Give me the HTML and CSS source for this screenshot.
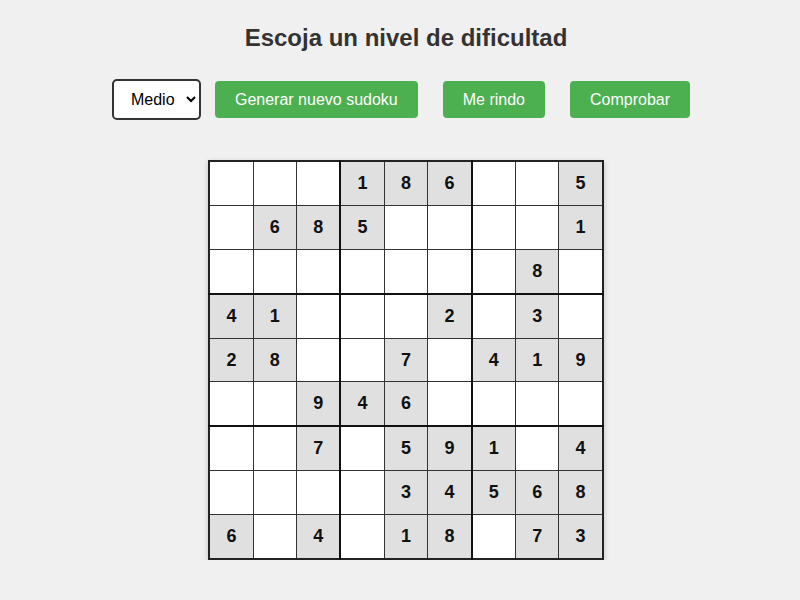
FILE: index.html
```html
<!DOCTYPE html>
<html lang="es">
<head>
<meta charset="utf-8">
<title>Sudoku</title>
<link rel="stylesheet" href="styles.css">
</head>
<body>
<main class="page">
  <h1 class="title">Escoja un nivel de dificultad</h1>
  <div class="controls">
    <select class="level">
      <option>Fácil</option>
      <option selected>Medio</option>
      <option>Difícil</option>
    </select>
    <button class="btn btn-first">Generar nuevo sudoku</button>
    <button class="btn">Me rindo</button>
    <button class="btn">Comprobar</button>
  </div>
  <table class="board">
    <tr><td></td><td></td><td class="c3"></td><td class="g">1</td><td class="g">8</td><td class="g c3">6</td><td></td><td></td><td class="g">5</td></tr>
    <tr><td></td><td class="g">6</td><td class="g c3">8</td><td class="g">5</td><td></td><td class="c3"></td><td></td><td></td><td class="g">1</td></tr>
    <tr class="r3"><td></td><td></td><td class="c3"></td><td></td><td></td><td class="c3"></td><td></td><td class="g">8</td><td></td></tr>
    <tr><td class="g">4</td><td class="g">1</td><td class="c3"></td><td></td><td></td><td class="g c3">2</td><td></td><td class="g">3</td><td></td></tr>
    <tr><td class="g">2</td><td class="g">8</td><td class="c3"></td><td></td><td class="g">7</td><td class="c3"></td><td class="g">4</td><td class="g">1</td><td class="g">9</td></tr>
    <tr class="r3"><td></td><td></td><td class="g c3">9</td><td class="g">4</td><td class="g">6</td><td class="c3"></td><td></td><td></td><td></td></tr>
    <tr><td></td><td></td><td class="g c3">7</td><td></td><td class="g">5</td><td class="g c3">9</td><td class="g">1</td><td></td><td class="g">4</td></tr>
    <tr><td></td><td></td><td class="c3"></td><td></td><td class="g">3</td><td class="g c3">4</td><td class="g">5</td><td class="g">6</td><td class="g">8</td></tr>
    <tr><td class="g">6</td><td></td><td class="g c3">4</td><td></td><td class="g">1</td><td class="g c3">8</td><td></td><td class="g">7</td><td class="g">3</td></tr>
  </table>
</main>
</body>
</html>
```
FILE: styles.css
```css
html, body {
  margin: 0;
  padding: 0;
  background: #f0f0f0;
  font-family: "Liberation Sans", Arial, sans-serif;
}

.page {
  display: flex;
  flex-direction: column;
  align-items: center;
  padding-top: 24px;
}

.title {
  margin: 0;
  font-size: 24px;
  line-height: 27px;
  font-weight: bold;
  color: #333;
  padding-left: 12px;
}

.controls {
  display: flex;
  align-items: center;
  margin-top: 28px;
  padding-left: 2px;
}

.level {
  width: 89px;
  height: 41px;
  border: 2px solid #333;
  border-radius: 5px;
  background: #fff;
  font-family: "Liberation Sans", Arial, sans-serif;
  font-size: 16px;
  padding: 0 0 0 13px;
  color: #000;
}

.btn {
  height: 37px;
  margin-left: 25px;
  padding: 0 20px;
  border: none;
  border-radius: 4px;
  background: #4caf50;
  color: #fff;
  font-family: "Liberation Sans", Arial, sans-serif;
  font-size: 16px;
}

.btn-first {
  margin-left: 14px;
}

.board {
  margin-top: 40px;
  margin-left: 12px;
  border-collapse: collapse;
  border: 2px solid #222;
  box-shadow: 0 2px 6px rgba(0, 0, 0, 0.2);
  background: #fff;
}

.board td {
  width: 42.4px;
  height: 42.9px;
  padding: 0;
  border: 1px solid #333;
  text-align: center;
  vertical-align: middle;
  font-size: 18px;
  font-weight: bold;
  color: #111;
  background: #fff;
}

.board td.g {
  background: #e0e0e0;
}

.board td.c3 {
  border-right: 2px solid #111;
}

.board tr.r3 td {
  border-bottom: 2px solid #111;
}
```
